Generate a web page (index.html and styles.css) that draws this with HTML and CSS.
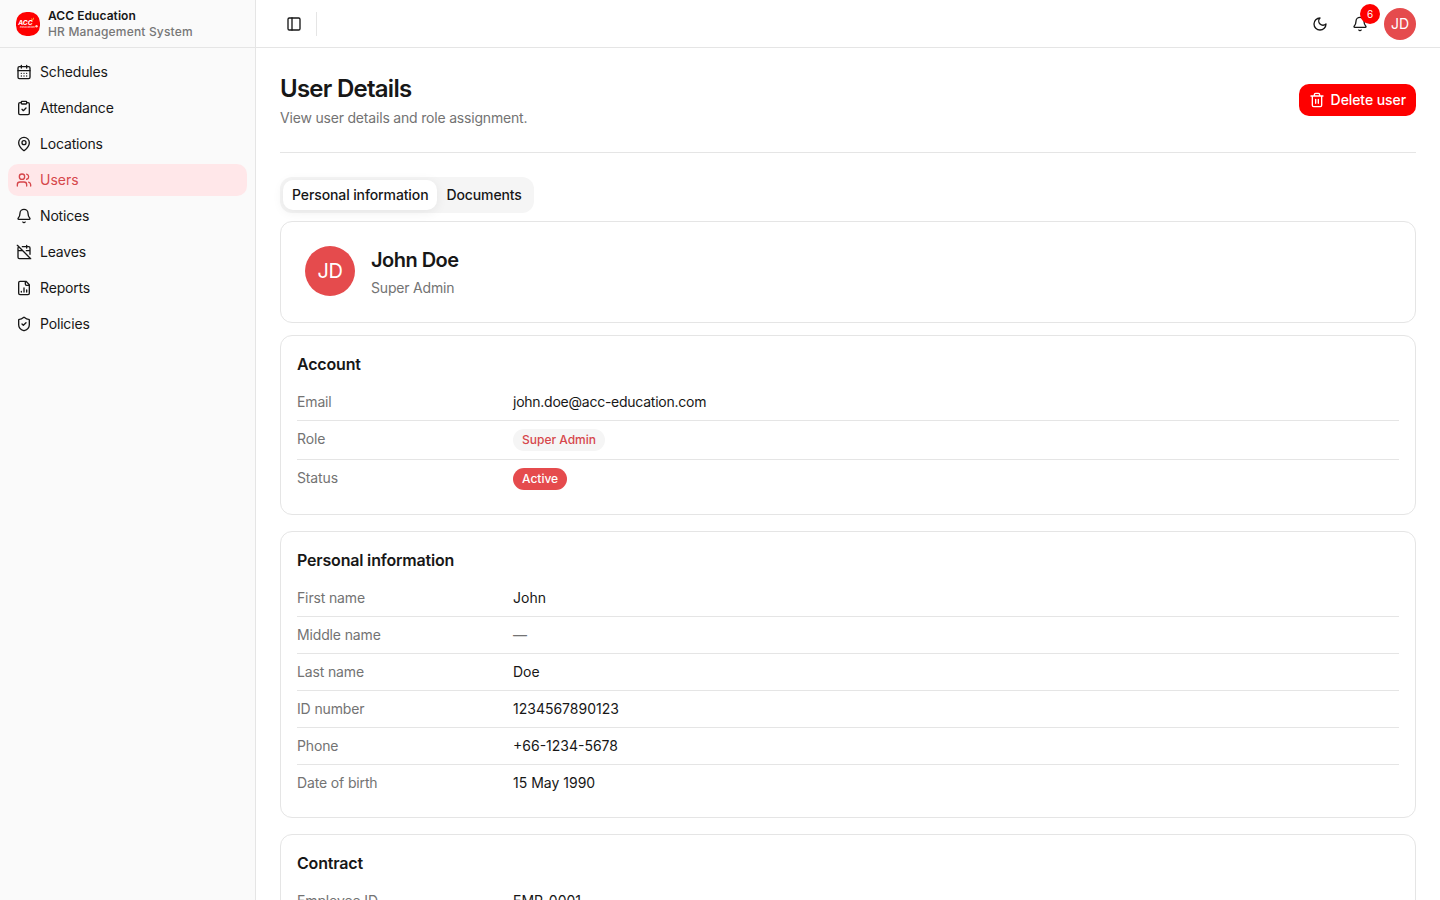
FILE: index.html
```html
<!DOCTYPE html>
<html lang="en">
<head>
<meta charset="utf-8">
<title>User Details - ACC Education</title>
<link rel="stylesheet" href="styles.css">
</head>
<body>
<div class="app">
  <aside class="sidebar">
    <div class="brand">
      <svg class="logo" viewBox="0 0 24 24"><rect width="24" height="24" rx="10.5" fill="#fe0000"/><text x="2.2" y="13" class="logo-name" textLength="14.5" lengthAdjust="spacingAndGlyphs">ACC</text><text x="4" y="16" class="logo-sub" textLength="15" lengthAdjust="spacingAndGlyphs">education</text><path d="M15 6.6l2 1.8M17.5 5.8l-.4 2" stroke="#ffb13b" stroke-width="1"/><circle cx="20.5" cy="14.3" r="1.2" fill="#ffd6cc"/></svg>
      <div class="brand-text"><div>ACC Education</div><div class="brand-sub">HR Management System</div></div>
    </div>
    <nav class="nav">
      <a class="nav-item"><svg class="icon" viewBox="0 0 24 24"><path d="M8 2v4M16 2v4M3 10h18M8 14h.01M12 14h.01M16 14h.01M8 18h.01M12 18h.01M16 18h.01"/><rect x="3" y="4" width="18" height="18" rx="2"/></svg>Schedules</a>
      <a class="nav-item"><svg class="icon" viewBox="0 0 24 24"><rect x="8" y="2" width="8" height="4" rx="1"/><path d="M16 4h2a2 2 0 0 1 2 2v14a2 2 0 0 1-2 2H6a2 2 0 0 1-2-2V6a2 2 0 0 1 2-2h2M9 14l2 2 4-4"/></svg>Attendance</a>
      <a class="nav-item"><svg class="icon" viewBox="0 0 24 24"><path d="M20 10c0 4.993-5.539 10.193-7.399 11.799a1 1 0 0 1-1.202 0C9.539 20.193 4 14.993 4 10a8 8 0 0 1 16 0"/><circle cx="12" cy="10" r="3"/></svg>Locations</a>
      <a class="nav-item active"><svg class="icon" viewBox="0 0 24 24"><path d="M16 21v-2a4 4 0 0 0-4-4H6a4 4 0 0 0-4 4v2M16 3.128a4 4 0 0 1 0 7.744M22 21v-2a4 4 0 0 0-3-3.87"/><circle cx="9" cy="7" r="4"/></svg>Users</a>
      <a class="nav-item"><svg class="icon" viewBox="0 0 24 24"><path d="M10.268 21a2 2 0 0 0 3.464 0M3.262 15.326A1 1 0 0 0 4 17h16a1 1 0 0 0 .74-1.673C19.41 13.956 18 12.499 18 8A6 6 0 0 0 6 8c0 4.499-1.411 5.956-2.738 7.326"/></svg>Notices</a>
      <a class="nav-item"><svg class="icon" viewBox="0 0 24 24"><path d="M4.2 4.2A2 2 0 0 0 3 6v14a2 2 0 0 0 2 2h14a2 2 0 0 0 1.82-1.18M21 15.5V6a2 2 0 0 0-2-2H9.5M16 2v4M3 10h7M21 10h-5.5M2 2l20 20"/></svg>Leaves</a>
      <a class="nav-item"><svg class="icon" viewBox="0 0 24 24"><path d="M15 2H6a2 2 0 0 0-2 2v16a2 2 0 0 0 2 2h12a2 2 0 0 0 2-2V7ZM14 2v4a2 2 0 0 0 2 2h4M8 18v-1M12 18v-6M16 18v-3"/></svg>Reports</a>
      <a class="nav-item"><svg class="icon" viewBox="0 0 24 24"><path d="M20 13c0 5-3.5 7.5-7.66 8.95a1 1 0 0 1-.67-.01C7.5 20.5 4 18 4 13V6a1 1 0 0 1 1-1c2 0 4.5-1.2 6.24-2.72a1.17 1.17 0 0 1 1.52 0C14.51 3.81 17 5 19 5a1 1 0 0 1 1 1zM9 12l2 2 4-4"/></svg>Policies</a>
    </nav>
  </aside>
  <div class="page">
    <header class="topbar">
      <div class="top-left"><svg class="icon" viewBox="0 0 24 24"><rect x="3" y="3" width="18" height="18" rx="2"/><path d="M9 3v18"/></svg><span class="divider"></span></div>
      <div class="top-right">
        <svg class="icon" viewBox="0 0 24 24"><path d="M12 3a6 6 0 0 0 9 9 9 9 0 1 1-9-9Z"/></svg>
        <div class="bell"><svg class="icon" viewBox="0 0 24 24"><path d="M10.268 21a2 2 0 0 0 3.464 0M3.262 15.326A1 1 0 0 0 4 17h16a1 1 0 0 0 .74-1.673C19.41 13.956 18 12.499 18 8A6 6 0 0 0 6 8c0 4.499-1.411 5.956-2.738 7.326"/></svg><span class="count">6</span></div>
        <span class="avatar">JD</span>
      </div>
    </header>
    <main class="content">
      <div class="page-head">
        <div><h1>User Details</h1><p class="muted lead">View user details and role assignment.</p></div>
        <button class="delete"><svg class="icon" viewBox="0 0 24 24"><path d="M10 11v6M14 11v6M19 6v14a2 2 0 0 1-2 2H7a2 2 0 0 1-2-2V6M3 6h18M8 6V4a2 2 0 0 1 2-2h4a2 2 0 0 1 2 2v2"/></svg>Delete user</button>
      </div>
      <div class="tabs"><span class="tab selected">Personal information</span><span class="tab">Documents</span></div>
      <section class="profile">
        <span class="avatar large">JD</span>
        <div><h2>John Doe</h2><p class="muted lead">Super Admin</p></div>
      </section>
      <section class="card">
        <h3>Account</h3>
        <dl>
          <div class="row"><dt>Email</dt><dd class="email">john.doe@acc-education.com</dd></div>
          <div class="row"><dt>Role</dt><dd><span class="badge soft">Super Admin</span></dd></div>
          <div class="row"><dt>Status</dt><dd><span class="badge">Active</span></dd></div>
        </dl>
      </section>
      <section class="card">
        <h3>Personal information</h3>
        <dl>
          <div class="row"><dt>First name</dt><dd>John</dd></div>
          <div class="row"><dt>Middle name</dt><dd class="muted">—</dd></div>
          <div class="row"><dt>Last name</dt><dd>Doe</dd></div>
          <div class="row"><dt>ID number</dt><dd>1234567890123</dd></div>
          <div class="row"><dt>Phone</dt><dd>+66-1234-5678</dd></div>
          <div class="row"><dt>Date of birth</dt><dd>15 May 1990</dd></div>
        </dl>
      </section>
      <section class="card">
        <h3>Contract</h3>
        <dl><div class="row"><dt>Employee ID</dt><dd>EMP-0001</dd></div></dl>
      </section>
    </main>
  </div>
</div>
</body>
</html>
```

FILE: styles.css
```css
* { box-sizing: border-box; }
body, h1, h2, h3, p, dl, dd { margin: 0; }
body { font: 400 14px/20px Inter, "Liberation Sans", sans-serif; color: #171717; background: #fff; }
.app { display: flex; height: 100vh; overflow: hidden; }
.icon { width: 16px; height: 16px; flex: none; fill: none; stroke: currentColor; stroke-width: 2; stroke-linecap: round; stroke-linejoin: round; }
.muted { color: #737373; }
.lead { letter-spacing: -0.19px; }
.sidebar { width: 256px; flex: none; background: #fafafa; border-right: 1px solid #e5e5e5; }
.brand { display: flex; align-items: center; gap: 8px; height: 48px; padding-left: 16px; border-bottom: 1px solid #e5e5e5; }
.logo { width: 24px; height: 24px; flex: none; }
.logo-name { font: italic 700 6.5px Inter, sans-serif; fill: #fff; }
.logo-sub { font: italic 600 2.6px Inter, sans-serif; fill: #ffd5d5; }
.brand-text { font-size: 12px; line-height: 16px; font-weight: 600; letter-spacing: 0.06px; }
.brand-sub { color: #777; font-weight: 500; letter-spacing: 0.18px; }
.nav { display: flex; flex-direction: column; gap: 4px; padding: 8px; }
.nav-item { display: flex; align-items: center; gap: 8px; height: 32px; padding: 0 8px; border-radius: 10px; letter-spacing: -0.17px; }
.nav-item.active { background: #ffe7e9; color: #d6474b; letter-spacing: 0; }
.page { flex: 1; min-width: 0; }
.topbar { display: flex; align-items: center; justify-content: space-between; height: 48px; padding: 0 24px 0 30px; border-bottom: 1px solid #e5e5e5; }
.top-left { display: flex; align-items: center; gap: 14px; }
.divider { width: 1px; height: 24px; background: #e5e5e5; }
.top-right { display: flex; align-items: center; }
.bell { position: relative; display: flex; margin: 0 16px 0 24px; }
.count { position: absolute; left: 8px; top: -12px; width: 20px; height: 20px; border-radius: 50%; background: #fe0000; color: #fff; font-size: 10px; text-align: center; }
.avatar { display: flex; align-items: center; justify-content: center; flex: none; width: 32px; height: 32px; border-radius: 50%; background: #e54b4d; color: #fff; }
.avatar.large { width: 50px; height: 50px; font-size: 20px; letter-spacing: -0.5px; }
.content { display: flex; flex-direction: column; padding: 24px; }
.page-head { display: flex; justify-content: space-between; align-items: flex-start; height: 81px; border-bottom: 1px solid #e5e5e5; margin-bottom: 24px; }
h1 { font-size: 24px; line-height: 32px; font-weight: 600; letter-spacing: -0.74px; padding-top: 1px; margin-bottom: 3px; }
.delete { display: flex; align-items: center; gap: 6px; height: 32px; margin-top: 12px; padding: 0 10px; border: 0; border-radius: 10px; background: #fe0000; color: #fff; font: 500 14px/20px Inter, sans-serif; letter-spacing: -0.08px; }
.tabs { display: flex; align-self: flex-start; height: 36px; padding: 3px; margin-bottom: 8px; border-radius: 12px; background: #f5f5f5; }
.tab { display: flex; align-items: center; padding: 0 9px; border-radius: 10px; font-weight: 500; letter-spacing: -0.11px; }
.tab.selected { background: #fff; box-shadow: 0 2px 12px rgba(0,0,0,.07); }
.profile { display: flex; align-items: flex-start; gap: 16px; padding: 24px; margin-bottom: 12px; border: 1px solid #e5e5e5; border-radius: 12px; }
h2 { font-size: 20px; line-height: 28px; font-weight: 600; letter-spacing: -0.52px; margin-bottom: 4px; }
.card { padding: 16px; margin-bottom: 16px; border: 1px solid #e5e5e5; border-radius: 12px; }
h3 { font-size: 16px; line-height: 24px; font-weight: 600; letter-spacing: -0.18px; margin-bottom: 8px; }
.row { display: grid; grid-template-columns: 200px 1fr; gap: 16px; padding: 8px 0; border-bottom: 1px solid #e5e5e5; }
.row:last-child { border-bottom: 0; }
dt { color: #737373; letter-spacing: -0.14px; }
dd { display: flex; }
.email { letter-spacing: -0.25px; }
.badge { height: 22px; padding: 1px 9px; border-radius: 11px; background: #e54b4d; color: #fff; font-size: 12px; font-weight: 500; }
.badge.soft { background: #f5f5f5; color: #d6474b; }
```
